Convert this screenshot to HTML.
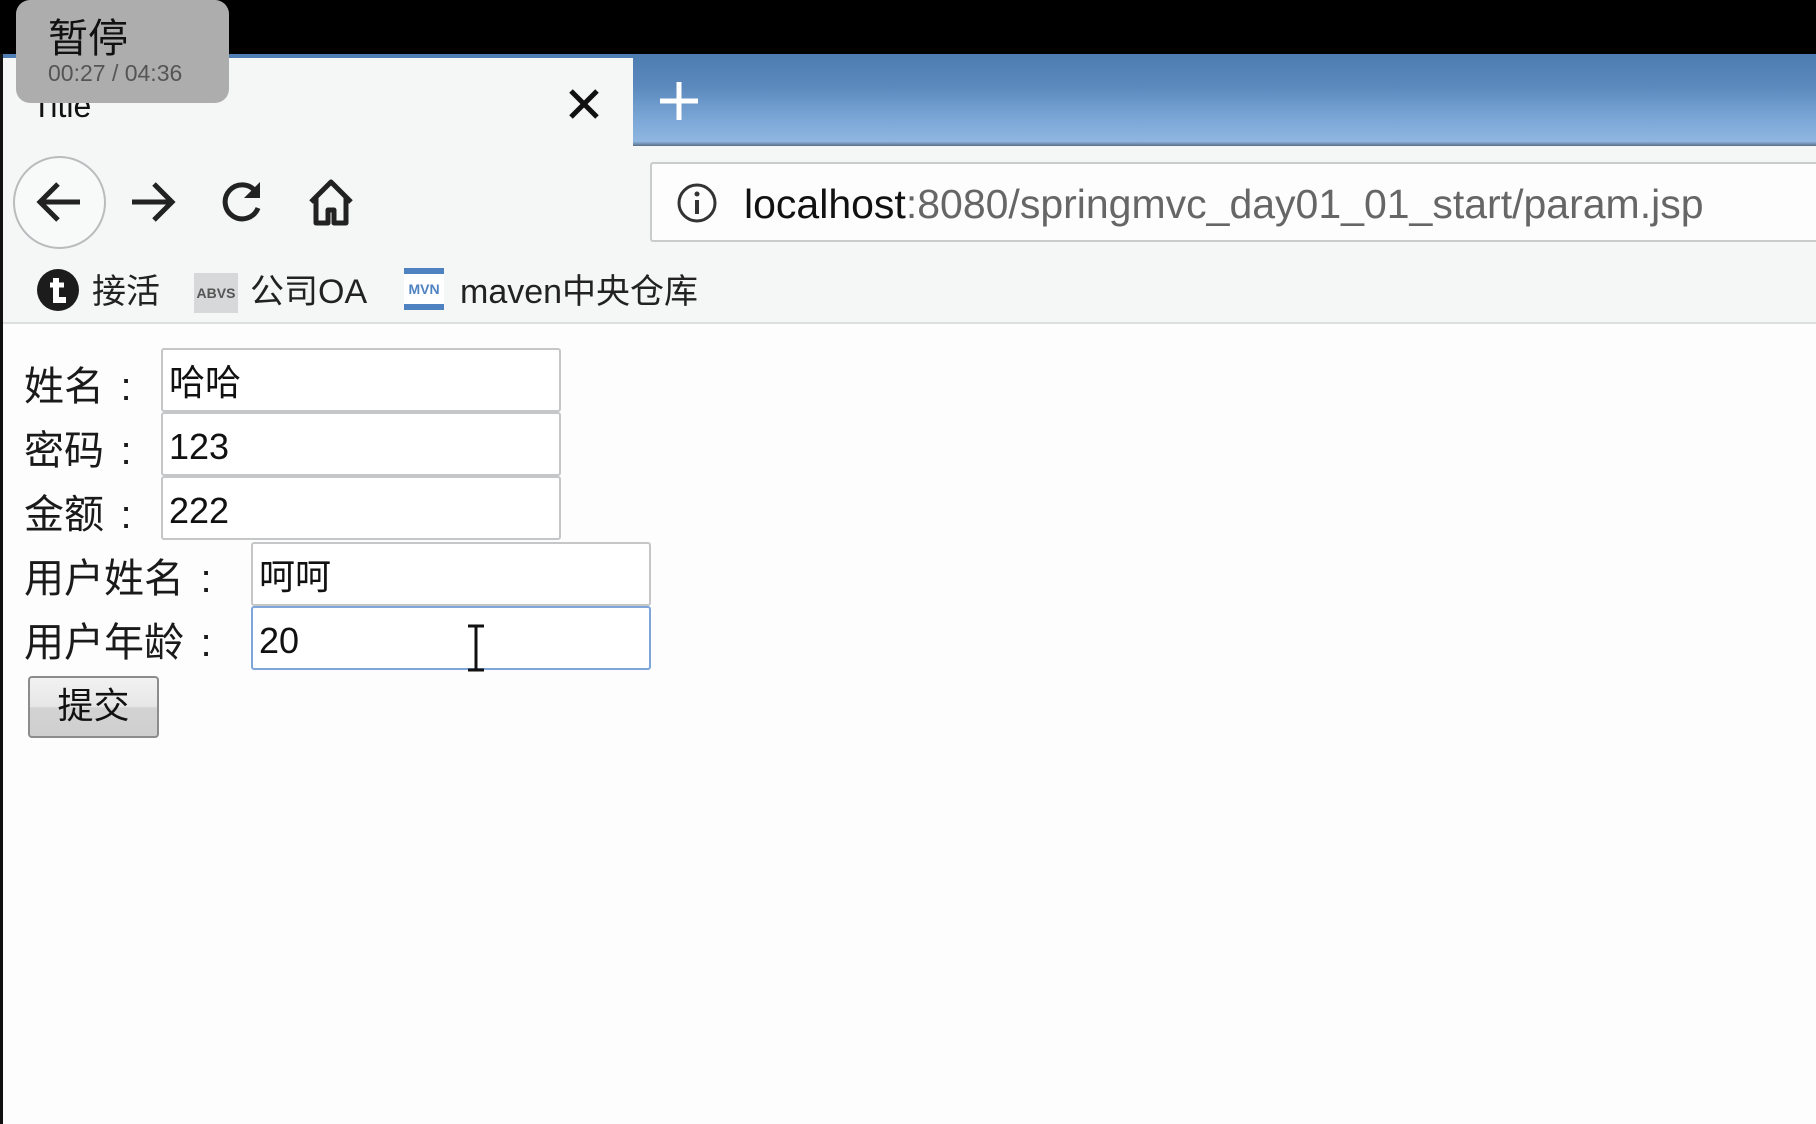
<!DOCTYPE html>
<html><head><meta charset="utf-8"><style>
*{margin:0;padding:0;box-sizing:border-box}
body{width:1816px;height:1124px;overflow:hidden;background:#fcfdfc;position:relative;font-family:"Liberation Sans","Noto Sans CJK SC",sans-serif}
.abs{position:absolute}
.top{left:0;top:0;width:1816px;height:54px;background:#000}
.leftedge{left:0;top:54px;width:3px;height:1070px;background:#111}
.tabs{left:633px;top:54px;width:1183px;height:92px;background:linear-gradient(180deg,#4d7cb0 0%,#5b89bd 35%,#7aa6d6 70%,#8fb6e0 95%,#5a6e86 100%)}
.tab{left:3px;top:54px;width:630px;height:92px;background:#f5f6f6;border-top:4px solid #4f7eb3}
.toolbar{left:3px;top:146px;width:1813px;height:178px;background:#f5f6f6;border-bottom:2px solid #dcdedf}
.url{left:650px;top:162px;width:1170px;height:80px;background:#fdfdfd;border:2px solid #c9cbcc;border-right:none;border-radius:3px 0 0 3px}
.lbl{font-size:40px;color:#1a1a1a;left:24px;white-space:nowrap}
.lbl b{font-weight:normal;display:inline-block;width:40px;text-align:center;margin-left:2px}
.inp{background:#fff;border:2px solid #c4c6c8;border-radius:3px;font-size:36px;color:#111;padding-left:6px;padding-top:3px;line-height:60px;height:64px}
.bm{font-size:34px;color:#222;top:264px}
</style></head><body>
<div class="abs top"></div>
<div class="abs tabs"></div>
<div class="abs tab"></div>
<div class="abs" style="left:32px;top:88px;font-size:32px;color:#111">Title</div>
<svg class="abs" style="left:566px;top:86px" width="36" height="36"><path d="M5 5L31 31M31 5L5 31" stroke="#111" stroke-width="5"/></svg>
<svg class="abs" style="left:658px;top:80px" width="42" height="42"><path d="M21 2V40M2 21H40" stroke="#fff" stroke-width="5"/></svg>
<div class="abs toolbar"></div>
<div class="abs" style="left:13px;top:156px;width:93px;height:93px;border-radius:50%;border:2px solid #b9bbbd;background:#f8f9f9"></div>
<svg class="abs" style="left:34px;top:180px" width="50" height="44"><path d="M46 22H6M24 4L6 22L24 40" stroke="#222" stroke-width="5" fill="none"/></svg>
<svg class="abs" style="left:128px;top:180px" width="50" height="44"><path d="M4 22H44M26 4L44 22L26 40" stroke="#222" stroke-width="5" fill="none"/></svg>
<svg class="abs" style="left:218px;top:178px" width="48" height="48"><path d="M38 14A17 17 0 1 0 40 30" stroke="#222" stroke-width="5" fill="none"/><path d="M42 4V20H26Z" fill="#222"/></svg>
<svg class="abs" style="left:306px;top:178px" width="50" height="50"><path d="M5 24L25 4L45 24M10 20V45H22V32H28V45H40V20" stroke="#222" stroke-width="5" fill="none" stroke-linejoin="round"/></svg>
<div class="abs url"></div>
<svg class="abs" style="left:676px;top:182px" width="42" height="42"><circle cx="21" cy="21" r="18" stroke="#333" stroke-width="3" fill="none"/><circle cx="21" cy="12" r="2.5" fill="#333"/><path d="M21 18V32" stroke="#333" stroke-width="4"/></svg>
<div class="abs" style="left:744px;top:181px;font-size:41px;color:#111;white-space:nowrap">localhost<span style="color:#666">:8080/springmvc_day01_01_start/param.jsp</span></div>
<svg class="abs" style="left:36px;top:268px" width="44" height="44"><circle cx="22" cy="22" r="21" fill="#1c1c1c"/><path d="M20 10V32H30" stroke="#fff" stroke-width="6" fill="none"/><path d="M14 17H28" stroke="#fff" stroke-width="5"/></svg>
<div class="abs bm" style="left:92px">接活</div>
<div class="abs" style="left:194px;top:273px;width:44px;height:40px;background:#d6d8d9;font-size:14px;font-weight:bold;color:#555;line-height:40px;text-align:center">ABVS</div>
<div class="abs bm" style="left:250px">公司OA</div>
<div class="abs" style="left:404px;top:268px;width:40px;height:42px;background:#fff;border-top:6px solid #4e82c1;border-bottom:6px solid #4e82c1;font-size:14px;font-weight:bold;color:#4e82c1;line-height:30px;text-align:center">MVN</div>
<div class="abs bm" style="left:460px">maven中央仓库</div>

<div class="abs lbl" style="top:354px">姓名<b>:</b></div>
<div class="abs inp" style="left:161px;top:348px;width:400px">哈哈</div>
<div class="abs lbl" style="top:418px">密码<b>:</b></div>
<div class="abs inp" style="left:161px;top:412px;width:400px">123</div>
<div class="abs lbl" style="top:482px">金额<b>:</b></div>
<div class="abs inp" style="left:161px;top:476px;width:400px">222</div>
<div class="abs lbl" style="top:546px">用户姓名<b>:</b></div>
<div class="abs inp" style="left:251px;top:542px;width:400px">呵呵</div>
<div class="abs lbl" style="top:610px">用户年龄<b>:</b></div>
<div class="abs inp" style="left:251px;top:606px;width:400px;border-color:#7ea6d8">20</div>
<svg class="abs" style="left:464px;top:624px" width="24" height="48"><path d="M4 2H20M12 2V46M4 46H20" stroke="#111" stroke-width="3"/></svg>
<div class="abs" style="left:28px;top:676px;width:131px;height:62px;border:2px solid #8a8c8e;border-radius:4px;background:linear-gradient(#f2f2f2,#e6e6e6 50%,#d3d3d3 51%,#cfcfcf);font-size:36px;line-height:56px;text-align:center;color:#111">提交</div>

<div class="abs" style="left:16px;top:0;width:213px;height:103px;background:#adadad;border-radius:14px"></div>
<div class="abs" style="left:48px;top:6px;font-size:40px;color:#111">暂停</div>
<div class="abs" style="left:48px;top:60px;font-size:23px;color:#555">00:27 / 04:36</div>
<div class="abs leftedge"></div>
</body></html>
